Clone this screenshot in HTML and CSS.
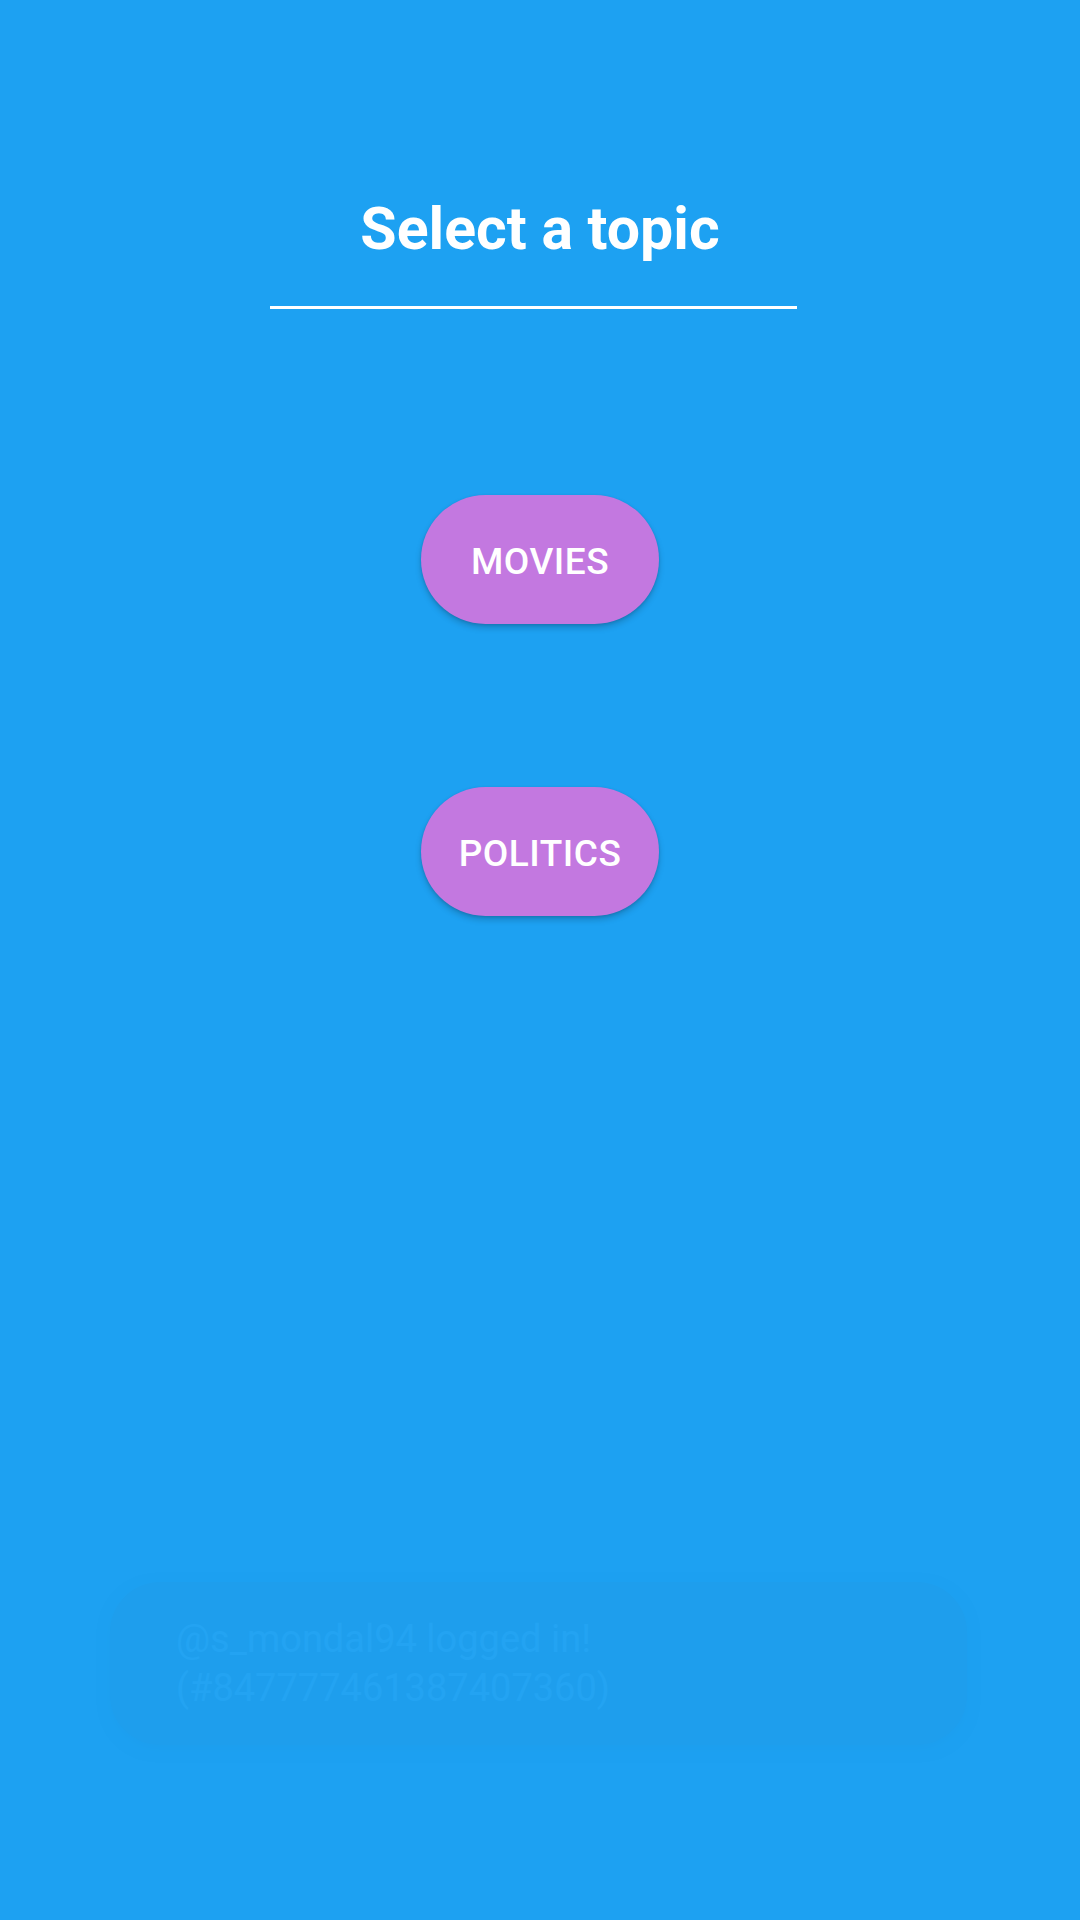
FILE: index.html
```html
<!DOCTYPE html>
<html>
<head>
<meta charset="utf-8">
<link rel="stylesheet" href="styles.css">
</head>
<body>
<div class="screen">
  <header class="header">
    <h1 class="title">Select a topic</h1>
    <div class="rule"></div>
  </header>
  <div class="topics">
    <button class="topic">MOVIES</button>
    <button class="topic">POLITICS</button>
  </div>
  <div class="toast">
    <p class="toast-text">@s_mondal94 logged in!<br>(#847777461387407360)</p>
  </div>
</div>
</body>
</html>
```

FILE: styles.css
```css
html, body {
  margin: 0;
  padding: 0;
  background: #1DA1F2;
}
.screen {
  width: 1080px;
  height: 1920px;
  position: relative;
  font-family: Roboto, "Noto Sans", sans-serif;
  display: flex;
  flex-direction: column;
  align-items: center;
}
.header {
  display: flex;
  flex-direction: column;
  align-items: center;
  padding-top: 191px;
}
.title {
  margin: 0;
  font-size: 59px;
  font-weight: 700;
  color: #ffffff;
  line-height: 76px;
}
.rule {
  width: 527px;
  height: 3px;
  background: #ffffff;
  margin-top: 39px;
  margin-right: 14px;
}
.topics {
  display: flex;
  flex-direction: column;
  align-items: center;
  gap: 163px;
  margin-top: 186px;
}
.topic {
  width: 238px;
  height: 129px;
  border: none;
  border-radius: 65px;
  background: #C378E0;
  color: #ffffff;
  font-family: Roboto, "Noto Sans", sans-serif;
  font-size: 37px;
  font-weight: 500;
  letter-spacing: 0.5px;
  box-shadow: 0 4px 6px rgba(0,0,0,0.18), 0 1px 3px rgba(0,0,0,0.12);
  padding: 4px 0 0 0;
}
.toast {
  position: absolute;
  left: 110px;
  top: 1582px;
  width: 857px;
  height: 163px;
  border-radius: 50px;
  background: #444444;
  opacity: 0.025;
  box-shadow: 0 4px 12px rgba(0,0,0,0.5);
  box-sizing: border-box;
  padding-left: 66px;
  display: flex;
  align-items: center;
}
.toast-text {
  margin: 0;
  font-size: 38px;
  line-height: 49px;
  color: #ffffff;
}
```
